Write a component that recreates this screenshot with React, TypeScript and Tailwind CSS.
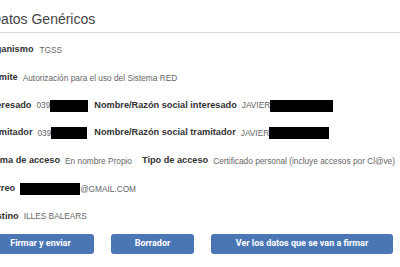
const Censor = ({ w }: { w: string }) => (
  <span className={`inline-block h-[12px] bg-black ${w}`} />
);

const Label = ({ children, className = "" }: { children: React.ReactNode; className?: string }) => (
  <span className={`font-bold text-[9.2px] text-[#333] whitespace-nowrap ${className}`}>{children}</span>
);

const Value = ({ children, className = "" }: { children: React.ReactNode; className?: string }) => (
  <span className={`text-[8.3px] text-[#666] whitespace-nowrap ${className}`}>{children}</span>
);

export default function App() {
  return (
    <div className="w-[400px] h-[267px] overflow-hidden bg-white font-['Liberation_Sans',Arial,sans-serif]">
      {/* Cabecera */}
      <div className="h-[33px] border-b border-[#ddd] pt-[10px]">
        <h2 className="ml-[-9px] text-[14px] leading-[18px] text-[#444] whitespace-nowrap">Datos Genéricos</h2>
      </div>

      {/* Datos */}
      <div className="ml-[-15px] pt-[3px]">
        <div className="h-[28px] flex items-center">
          <Label>Organismo</Label>
          <Value className="ml-[6px]">TGSS</Value>
        </div>
        <div className="h-[28px] flex items-center">
          <Label>Trámite</Label>
          <Value className="ml-[5px]">Autorización para el uso del Sistema RED</Value>
        </div>
        <div className="h-[27px] flex items-center">
          <Label>Interesado</Label>
          <Value className="ml-[5px]">039</Value>
          <Censor w="w-[38px]" />
          <Label className="ml-[6px]">Nombre/Razón social interesado</Label>
          <Value className="ml-[5px]">JAVIER</Value>
          <Censor w="w-[63px]" />
        </div>
        <div className="h-[28px] flex items-center">
          <Label>Tramitador</Label>
          <Value className="ml-[5px]">039</Value>
          <Censor w="w-[36px]" />
          <Label className="ml-[7px]">Nombre/Razón social tramitador</Label>
          <Value className="ml-[5px]">JAVIER</Value>
          <Censor w="w-[60px]" />
        </div>
        <div className="h-[28px] flex items-center">
          <Label>Forma de acceso</Label>
          <Value className="ml-[5px]">En nombre Propio</Value>
          <Label className="ml-[10px]">Tipo de acceso</Label>
          <Value className="ml-[5px]">Certificado personal (incluye accesos por Cl@ve)</Value>
        </div>
        <div className="h-[28px] flex items-center">
          <Label>Correo</Label>
          <Censor w="ml-[5px] w-[60px]" />
          <Value>@GMAIL.COM</Value>
        </div>
        <div className="h-[27px] flex items-center">
          <Label>Destino</Label>
          <Value className="ml-[5px]">ILLES BALEARS</Value>
        </div>
      </div>

      {/* Botones */}
      <div className="ml-[-13px] mt-[4px] flex gap-[17px] font-['Roboto',sans-serif]">
        <button className="w-[107px] h-[20px] rounded-[3px] bg-[#4a76b6] text-white text-[9px] font-bold">
          Firmar y enviar
        </button>
        <button className="w-[83px] h-[20px] rounded-[3px] bg-[#4a76b6] text-white text-[9px] font-bold">
          Borrador
        </button>
        <button className="w-[182px] h-[20px] rounded-[3px] bg-[#4a76b6] text-white text-[9px] font-bold">
          Ver los datos que se van a firmar
        </button>
      </div>
    </div>
  );
}
